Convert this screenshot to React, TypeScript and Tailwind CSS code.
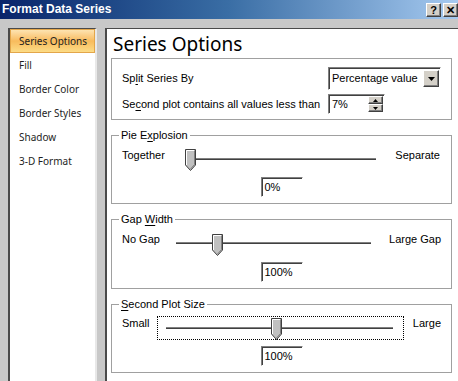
import React from 'react'

const ui = { fontFamily: '"Liberation Sans", Arial, sans-serif' }
const seg = { fontFamily: '"Noto Sans", "Open Sans", sans-serif' }

const raised =
    'border border-t-white border-l-white border-r-[#404040] border-b-[#404040] shadow-[inset_-1px_-1px_#808080] bg-[#d4d0c8]'
const sunken =
    'border border-t-[#808080] border-l-[#808080] border-r-white border-b-white shadow-[inset_1px_1px_#404040] bg-white'

function Thumb() {
    return (
        <svg width="11" height="22" viewBox="0 0 11 22">
            <polygon points="0.5,0.5 10.5,0.5 10.5,16 5.5,21.5 0.5,16" fill="#c0c0c0" stroke="#404040" />
            <polyline points="1.5,16 1.5,1.5 9.5,1.5" fill="none" stroke="#ffffff" />
            <polyline points="9.5,1.5 9.5,15.5 5.5,20" fill="none" stroke="#808080" />
        </svg>
    )
}

function Track({ className }: { className: string }) {
    return (
        <div className={`absolute h-[3px] border-t border-[#808080] bg-[#404040] border-b border-b-white ${className}`} />
    )
}

function ValueBox({ value }: { value: string }) {
    return (
        <div className="flex justify-center mt-[6px]">
            <div className={`w-[42px] h-[20px] ${sunken} pl-[3px] text-[11px] leading-[18px] text-black`}>{value}</div>
        </div>
    )
}

function Group({ label, children }: { label: React.ReactNode; children: React.ReactNode }) {
    return (
        <div className="mt-[15px] border border-[#a0a0a0] pb-[6px]">
            <div className="-mt-[8px] ml-[7px] px-[2px] w-fit bg-white leading-[14px] text-[11px] text-black whitespace-nowrap">{label}</div>
            {children}
        </div>
    )
}

export default function App() {
    const nav = ['Fill', 'Border Color', 'Border Styles', 'Shadow', '3-D Format']

    return (
        <div className="w-[458px] h-[381px] overflow-hidden bg-[#c8c8c8] flex flex-col" style={ui}>
            {/* Title bar */}
            <div className="h-[19px] shrink-0 flex items-center bg-linear-to-r from-[#0a246a] via-[#3a6ea5] to-[#a6caf0]">
                <span className="pl-[2px] text-white font-bold text-[12px] leading-[19px]">Format Data Series</span>
                <div className="ml-auto flex gap-[2px] mt-[1px]">
                    <div className={`w-[15px] h-[14px] ${raised} flex items-center justify-center text-[11px] font-bold leading-none text-black`}>?</div>
                    <div className={`w-[15px] h-[14px] ${raised} flex items-center justify-center text-[11px] font-bold leading-none text-black`}>✕</div>
                </div>
            </div>

            <div className="flex pt-[9px] pl-[8px] flex-1 min-h-0">
                {/* Left nav */}
                <div className="w-[89px] shrink-0 bg-white border-l-2 border-t border-r-2 border-l-[#4a4a4a] border-t-[#4a4a4a] border-r-[#e8e8e8] text-[10px] text-[#1e1e1e]" style={seg}>
                    <div className="h-[24px] flex items-center pl-[8px] border border-[#e3a64a] bg-linear-to-b from-[#fde3b0] via-[#f8bb5c] to-[#fcdc86]">
                        Series Options
                    </div>
                    {nav.map(n => (
                        <div key={n} className="h-[24px] flex items-center pl-[9px]">{n}</div>
                    ))}
                </div>

                {/* Main panel */}
                <div className="ml-[8px] w-[360px] shrink-0 bg-white border-l-2 border-t border-l-[#4a4a4a] border-t-[#4a4a4a] pl-[4px]">
                    <div className="pt-[4px] pl-[2px] text-[19px] leading-[22px] text-black" style={seg}>Series Options</div>

                    {/* Split options box */}
                    <div className="mt-[3px] w-[341px] border border-[#a0a0a0] pt-[8px] pb-[5px] pl-[10px] text-[11px] text-black whitespace-nowrap">
                        <div className="flex items-center h-[23px]">
                            <span className="w-[206px]">Sp<span className="underline underline-offset-2">l</span>it Series By</span>
                            <div className={`w-[113px] h-[23px] ${sunken} flex items-center`}>
                                <span className="pl-[3px] flex-1">Percentage value</span>
                                <div className={`w-[16px] h-[17px] mr-[1px] ${raised} flex items-center justify-center`}>
                                    <svg width="7" height="4" viewBox="0 0 7 4"><polygon points="0,0 7,0 3.5,4" fill="#000" /></svg>
                                </div>
                            </div>
                        </div>
                        <div className="flex items-center h-[20px] mt-[4px]">
                            <span className="w-[206px]">Se<span className="underline underline-offset-2">c</span>ond plot contains all values less than</span>
                            <div className={`w-[57px] h-[20px] ${sunken} flex items-center`}>
                                <span className="pl-[3px] flex-1">7%</span>
                                <div className="flex flex-col mr-[1px]">
                                    <div className={`w-[15px] h-[8px] ${raised} flex items-center justify-center`}>
                                        <svg width="5" height="3" viewBox="0 0 5 3"><polygon points="2.5,0 5,3 0,3" fill="#000" /></svg>
                                    </div>
                                    <div className={`w-[15px] h-[8px] ${raised} flex items-center justify-center`}>
                                        <svg width="5" height="3" viewBox="0 0 5 3"><polygon points="0,0 5,0 2.5,3" fill="#000" /></svg>
                                    </div>
                                </div>
                            </div>
                        </div>
                    </div>

                    <div className="w-[341px] text-[11px] text-black whitespace-nowrap">
                        {/* Pie Explosion */}
                        <Group label={<>Pie E<span className="underline underline-offset-2">x</span>plosion</>}>
                            <div className="flex items-start mt-[6px] pl-[10px] pr-[11px]">
                                <span className="w-[60px] leading-[14px]">Together</span>
                                <div className="relative w-[197px] h-[22px] mt-[1px]">
                                    <Track className="left-[8px] w-[186px] top-[9px]" />
                                    <div className="absolute left-[3px] top-0"><Thumb /></div>
                                </div>
                                <span className="ml-auto leading-[14px]">Separate</span>
                            </div>
                            <ValueBox value="0%" />
                        </Group>

                        {/* Gap Width */}
                        <Group label={<>Gap <span className="underline underline-offset-2">W</span>idth</>}>
                            <div className="flex items-start mt-[6px] pl-[10px] pr-[10px]">
                                <span className="w-[47px] leading-[14px]">No Gap</span>
                                <div className="relative w-[206px] h-[22px] mt-[2px]">
                                    <Track className="left-[7px] w-[195px] top-[8px]" />
                                    <div className="absolute left-[43px] top-0"><Thumb /></div>
                                </div>
                                <span className="ml-auto leading-[14px]">Large Gap</span>
                            </div>
                            <ValueBox value="100%" />
                        </Group>

                        {/* Second Plot Size */}
                        <Group label={<><span className="underline underline-offset-2">S</span>econd Plot Size</>}>
                            <div className="flex items-start mt-[5px] pl-[10px] pr-[10px]">
                                <span className="w-[35px] leading-[14px]">Small</span>
                                <div className="relative w-[247px] h-[24px] border border-dotted border-black">
                                    <Track className="left-[8px] w-[227px] top-[10px]" />
                                    <div className="absolute left-[113px] top-[1px]"><Thumb /></div>
                                </div>
                                <span className="ml-auto leading-[14px]">Large</span>
                            </div>
                            <ValueBox value="100%" />
                        </Group>

                        <Group label="Plot Series On">
                            <div className="h-[40px]" />
                        </Group>
                    </div>
                </div>
            </div>
        </div>
    )
}
